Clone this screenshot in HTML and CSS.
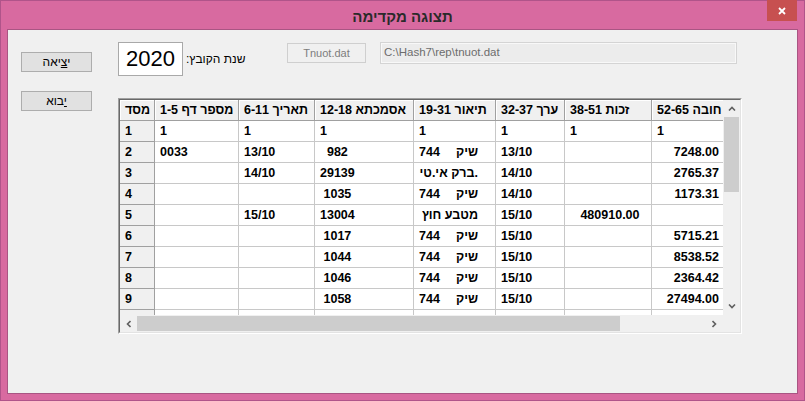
FILE: index.html
```html
<!DOCTYPE html>
<html lang="he">
<head>
  <meta charset="UTF-8">
  <title>תצוגה מקדימה</title>
  <link rel="stylesheet" href="styles.css">
</head>
<body>
  <div class="window">
    <!-- title bar -->
    <div class="titlebar">
      <span class="title" dir="rtl">תצוגה מקדימה</span>
      <div class="close">
        <svg width="8" height="8" viewBox="0 0 8 8"><path d="M1 1L7 7M7 1L1 7" stroke="#fff" stroke-width="1.8"/></svg>
      </div>
    </div>

    <div class="client">
      <div class="side">
        <button class="btn" dir="rtl">י<u>צ</u>יאה</button>
        <button class="btn" dir="rtl"><u>י</u>בוא</button>
      </div>

      <div class="main">
        <div class="topbar">
          <div class="year">2020</div>
          <span class="year-label" dir="rtl">שנת הקובץ:</span>
          <div class="file-btn">Tnuot.dat</div>
          <div class="path">C:\Hash7\rep\tnuot.dat</div>
        </div>

        <div class="grid">
          <div class="grid-inner">
            <div class="grid-top">
              <div class="cells">
                <div class="sheet">
                  <div class="cell head"><span dir="rtl">מסד</span></div>
                  <div class="cell head"><span dir="rtl">מספר דף 1-5</span></div>
                  <div class="cell head"><span dir="rtl">תאריך 6-11</span></div>
                  <div class="cell head"><span dir="rtl">אסמכתא 12-18</span></div>
                  <div class="cell head"><span dir="rtl">תיאור 19-31</span></div>
                  <div class="cell head"><span dir="rtl">ערך 32-37</span></div>
                  <div class="cell head"><span dir="rtl">זכות 38-51</span></div>
                  <div class="cell head"><span dir="rtl">חובה 52-65</span></div>

                  <div class="cell rowhead">1</div>
                  <div class="cell">1</div>
                  <div class="cell">1</div>
                  <div class="cell">1</div>
                  <div class="cell desc"><span>1</span></div>
                  <div class="cell">1</div>
                  <div class="cell">1</div>
                  <div class="cell">1</div>

                  <div class="cell rowhead">2</div>
                  <div class="cell">0033</div>
                  <div class="cell">13/10</div>
                  <div class="cell">  982</div>
                  <div class="cell desc"><span>744</span><span class="txt" dir="rtl">שיק</span></div>
                  <div class="cell">13/10</div>
                  <div class="cell"></div>
                  <div class="cell num">7248.00</div>

                  <div class="cell rowhead">3</div>
                  <div class="cell"></div>
                  <div class="cell">14/10</div>
                  <div class="cell">29139</div>
                  <div class="cell desc"><span class="txt" dir="ltr">ברק אי.טי.</span></div>
                  <div class="cell">14/10</div>
                  <div class="cell"></div>
                  <div class="cell num">2765.37</div>

                  <div class="cell rowhead">4</div>
                  <div class="cell"></div>
                  <div class="cell"></div>
                  <div class="cell"> 1035</div>
                  <div class="cell desc"><span>744</span><span class="txt" dir="rtl">שיק</span></div>
                  <div class="cell">14/10</div>
                  <div class="cell"></div>
                  <div class="cell num">1173.31</div>

                  <div class="cell rowhead">5</div>
                  <div class="cell"></div>
                  <div class="cell">15/10</div>
                  <div class="cell">13004</div>
                  <div class="cell desc"><span class="txt" dir="rtl">מטבע חוץ</span></div>
                  <div class="cell">15/10</div>
                  <div class="cell">   480910.00</div>
                  <div class="cell num"></div>

                  <div class="cell rowhead">6</div>
                  <div class="cell"></div>
                  <div class="cell"></div>
                  <div class="cell"> 1017</div>
                  <div class="cell desc"><span>744</span><span class="txt" dir="rtl">שיק</span></div>
                  <div class="cell">15/10</div>
                  <div class="cell"></div>
                  <div class="cell num">5715.21</div>

                  <div class="cell rowhead">7</div>
                  <div class="cell"></div>
                  <div class="cell"></div>
                  <div class="cell"> 1044</div>
                  <div class="cell desc"><span>744</span><span class="txt" dir="rtl">שיק</span></div>
                  <div class="cell">15/10</div>
                  <div class="cell"></div>
                  <div class="cell num">8538.52</div>

                  <div class="cell rowhead">8</div>
                  <div class="cell"></div>
                  <div class="cell"></div>
                  <div class="cell"> 1046</div>
                  <div class="cell desc"><span>744</span><span class="txt" dir="rtl">שיק</span></div>
                  <div class="cell">15/10</div>
                  <div class="cell"></div>
                  <div class="cell num">2364.42</div>

                  <div class="cell rowhead">9</div>
                  <div class="cell"></div>
                  <div class="cell"></div>
                  <div class="cell"> 1058</div>
                  <div class="cell desc"><span>744</span><span class="txt" dir="rtl">שיק</span></div>
                  <div class="cell">15/10</div>
                  <div class="cell"></div>
                  <div class="cell num">27494.00</div>

                  <div class="cell rowhead"></div>
                  <div class="cell"></div>
                  <div class="cell"></div>
                  <div class="cell"></div>
                  <div class="cell"></div>
                  <div class="cell"></div>
                  <div class="cell"></div>
                  <div class="cell"></div>
                </div>
              </div>

              <!-- vertical scrollbar -->
              <div class="vscroll">
                <div class="arrow">
                  <svg width="8" height="5" viewBox="0 0 8 5"><polyline points="1,4.5 4,1.5 7,4.5" fill="none" stroke="#606060" stroke-width="1.6"/></svg>
                </div>
                <div class="vthumb"></div>
                <div class="track"></div>
                <div class="arrow">
                  <svg width="8" height="5" viewBox="0 0 8 5"><polyline points="1,0.5 4,3.5 7,0.5" fill="none" stroke="#606060" stroke-width="1.6"/></svg>
                </div>
              </div>
            </div>

            <!-- horizontal scrollbar -->
            <div class="hscroll">
              <div class="arrow">
                <svg width="5" height="8" viewBox="0 0 5 8"><polyline points="4.5,1 1.5,4 4.5,7" fill="none" stroke="#606060" stroke-width="1.6"/></svg>
              </div>
              <div class="hthumb"></div>
              <div class="track"></div>
              <div class="arrow">
                <svg width="5" height="8" viewBox="0 0 5 8"><polyline points="0.5,1 3.5,4 0.5,7" fill="none" stroke="#606060" stroke-width="1.6"/></svg>
              </div>
              <div class="corner"></div>
            </div>
          </div>
        </div>
      </div>
    </div>
  </div>
</body>
</html>
```

FILE: styles.css
```css
/* Windows 8 style dialog, pink frame */
body {
  margin: 0;
  font-family: "Liberation Sans", Arial, sans-serif;
  background: #f0f0f0;
}
.window {
  position: relative;
  width: 805px;
  height: 401px;
  box-sizing: border-box;
  border: 1px solid #b0548a;
  background: #d86aa0;
  padding: 0 6px 6px 6px;
  display: flex;
  flex-direction: column;
}
.titlebar {
  height: 28px;
  display: flex;
  align-items: center;
  justify-content: center;
  padding-top: 2px;
  box-sizing: border-box;
}
.title {
  font-weight: bold;
  font-size: 15px;
  color: #2a2a2a;
}
.close {
  position: absolute;
  top: -1px;
  right: 7px;
  width: 30px;
  height: 21px;
  background: #c75050;
  display: flex;
  align-items: center;
  justify-content: center;
}
.client {
  flex: 1;
  display: flex;
  border: 1px solid #a95583;
  background: #f0f0f0;
}

/* left buttons */
.side {
  display: flex;
  flex-direction: column;
  gap: 19px;
  padding: 22px 0 0 13px;
}
.btn {
  width: 71px;
  height: 20px;
  padding: 0;
  border: 1px solid #adadad;
  background: #e1e1e1;
  color: #000;
  font-family: "Liberation Sans", Arial, sans-serif;
  font-size: 12px;
}

/* top controls */
.main {
  margin-left: 26px;
  padding-top: 12px;
}
.topbar {
  display: flex;
  align-items: center;
  height: 34px;
}
.year {
  width: 65px;
  height: 34px;
  box-sizing: border-box;
  border: 1px solid #a9a9a9;
  background: #fff;
  display: flex;
  align-items: center;
  justify-content: center;
  font-size: 22px;
  color: #000;
}
.year-label {
  width: 64px;
  margin-left: 3px;
  font-size: 12px;
  color: #000;
  text-align: left;
  white-space: nowrap;
}
.file-btn {
  align-self: flex-start;
  margin: 1px 0 0 37px;
  width: 79px;
  height: 20px;
  box-sizing: border-box;
  border: 1px solid #cfcfcf;
  background: #f0f0f0;
  color: #7d7d7d;
  font-size: 11px;
  display: flex;
  align-items: center;
  justify-content: center;
}
.path {
  align-self: flex-start;
  margin-left: 14px;
  width: 357px;
  height: 22px;
  box-sizing: border-box;
  border: 1px solid #d4d4d4;
  box-shadow: inset 0 0 0 1px #f8f8f8;
  background: #ececec;
  color: #6d6d6d;
  font-size: 11.5px;
  line-height: 14px;
  padding: 2px 0 0 3px;
}

/* data grid */
.grid {
  margin-top: 22px;
  width: 624px;
  height: 236px;
  box-sizing: border-box;
  border: 1px solid;
  border-color: #a0a0a0 #ffffff #ffffff #a0a0a0;
}
.grid-inner {
  height: 100%;
  box-sizing: border-box;
  border: 1px solid;
  border-color: #696969 #e3e3e3 #e3e3e3 #696969;
  display: flex;
  flex-direction: column;
}
.grid-top {
  display: flex;
  height: 215px;
}
.cells {
  width: 603px;
  overflow: hidden;
  background: #fff;
}
.sheet {
  display: grid;
  grid-template-columns: 35px 84px 76px 99px 82px 69px 87px 73px;
  grid-auto-rows: 21px;
  width: max-content;
}
.cell {
  box-sizing: border-box;
  border-right: 1px solid #c8c8c8;
  border-bottom: 1px solid #c8c8c8;
  padding-left: 5px;
  font-weight: bold;
  font-size: 12.5px;
  line-height: 20px;
  color: #000;
  white-space: pre;
  overflow: hidden;
}
.head {
  background: #f0f0f0;
  border-color: #a0a0a0;
  box-shadow: inset 1px 1px 0 #fff;
}
.rowhead {
  background: #f0f0f0;
  border-color: #a0a0a0;
}
.desc {
  display: flex;
  padding-right: 17px;
}
.desc .txt {
  margin-left: auto;
}
.num {
  text-align: right;
  padding-right: 5px;
}

/* scrollbars */
.vscroll {
  width: 17px;
  display: flex;
  flex-direction: column;
  background: #f0f0f0;
}
.hscroll {
  height: 17px;
  display: flex;
  background: #f0f0f0;
}
.arrow {
  width: 17px;
  height: 17px;
  flex: none;
  display: flex;
  align-items: center;
  justify-content: center;
}
.track {
  flex: 1;
}
.vthumb {
  height: 75px;
  margin: 0 1px;
  background: #cdcdcd;
}
.hthumb {
  width: 483px;
  margin: 1px 0;
  background: #cdcdcd;
}
.corner {
  width: 17px;
  background: #f0f0f0;
}
```
